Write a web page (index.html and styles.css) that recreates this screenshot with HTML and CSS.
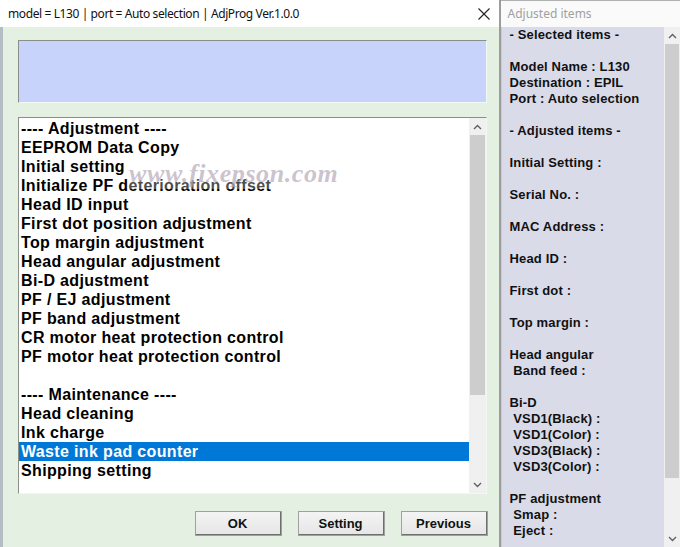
FILE: index.html
```html
<!DOCTYPE html>
<html lang="en">
<head>
  <meta charset="UTF-8">
  <title>AdjProg</title>
  <link rel="stylesheet" href="styles.css">
</head>
<body>
    <div class="main">
        <div class="titlebar">
            <span class="caption">model = L130 | port = Auto selection | AdjProg Ver.1.0.0</span>
            <svg class="close" width="12" height="12" viewBox="0 0 12 12">
                <path d="M0.5 0.5 L11.5 11.5 M11.5 0.5 L0.5 11.5" stroke="#222" stroke-width="1.1" fill="none"/>
            </svg>
        </div>
        <div class="content">
            <div class="message"></div>

            <div class="listbox">
                <ul class="items">
                    <li>---- Adjustment ----</li>
                    <li>EEPROM Data Copy</li>
                    <li>Initial setting</li>
                    <li>Initialize PF deterioration offset</li>
                    <li>Head ID input</li>
                    <li>First dot position adjustment</li>
                    <li>Top margin adjustment</li>
                    <li>Head angular adjustment</li>
                    <li>Bi-D adjustment</li>
                    <li>PF / EJ adjustment</li>
                    <li>PF band adjustment</li>
                    <li>CR motor heat protection control</li>
                    <li>PF motor heat protection control</li>
                    <li>&nbsp;</li>
                    <li>---- Maintenance ----</li>
                    <li>Head cleaning</li>
                    <li>Ink charge</li>
                    <li class="selected">Waste ink pad counter</li>
                    <li>Shipping setting</li>
                </ul>
                <div class="scrollbar">
                    <div class="arrow up"><svg width="9" height="6" viewBox="0 0 9 6"><path d="M1 5 L4.5 1.5 L8 5" stroke="#606060" stroke-width="1.4" fill="none"/></svg></div>
                    <div class="thumb list-thumb"></div>
                    <div class="track"></div>
                    <div class="arrow down"><svg width="9" height="6" viewBox="0 0 9 6"><path d="M1 1 L4.5 4.5 L8 1" stroke="#606060" stroke-width="1.4" fill="none"/></svg></div>
                </div>
                <div class="watermark">www.fixepson.com</div>
            </div>

            <div class="buttons">
                <button class="btn">OK</button>
                <button class="btn">Setting</button>
                <button class="btn">Previous</button>
            </div>
        </div>
    </div>

    <div class="side">
        <div class="side-title">Adjusted items</div>
        <div class="side-body">
            <div class="report">- Selected items -

Model Name : L130
Destination : EPIL
Port : Auto selection

- Adjusted items -

Initial Setting :

Serial No. :

MAC Address :

Head ID :

First dot :

Top margin :

Head angular
 Band feed :

Bi-D
 VSD1(Black) :
 VSD1(Color) :
 VSD3(Black) :
 VSD3(Color) :

PF adjustment
 Smap :
 Eject :</div>
            <div class="scrollbar side-scroll">
                <div class="arrow up"><svg width="9" height="6" viewBox="0 0 9 6"><path d="M1 5 L4.5 1.5 L8 5" stroke="#606060" stroke-width="1.4" fill="none"/></svg></div>
                <div class="thumb side-thumb"></div>
                <div class="track"></div>
                <div class="arrow down"><svg width="9" height="6" viewBox="0 0 9 6"><path d="M1 1 L4.5 4.5 L8 1" stroke="#606060" stroke-width="1.4" fill="none"/></svg></div>
            </div>
        </div>
    </div>
</body>
</html>
```

FILE: styles.css
```css
    html, body {
        height: 100%;
    }
    body {
        margin: 0;
        display: flex;
        flex-flow: row;
        overflow: hidden;
        font-family: "Liberation Sans", Arial, sans-serif;
        background-color: #e4f0e1;
    }
    .main {
        width: 500px;
        display: flex;
        flex-flow: column;
        background-color: #e4f0e1;
    }
    .titlebar {
        height: 27px;
        background-color: #ffffff;
        display: flex;
        align-items: center;
        justify-content: space-between;
        padding: 0 8px 0 8px;
    }
    .caption {
        font-family: "Noto Sans", sans-serif;
        font-size: 12px;
        color: #111;
        letter-spacing: -0.4px;
    }
    .close {
        margin-right: 1px;
    }
    .content {
        flex: 1;
        border-left: 3px solid #b4bcc4;
        padding: 13px 12px 0 15px;
    }
    .message {
        height: 61px;
        background-color: #c8d3fb;
        border: 1px solid #8a8f8a;
        border-right-color: #f4f8f4;
        border-bottom-color: #f4f8f4;
    }
    .listbox {
        position: relative;
        margin-top: 14px;
        height: 375px;
        background-color: #ffffff;
        border: 1px solid #8a8f8a;
        border-right-color: #f4f8f4;
        border-bottom-color: #f4f8f4;
        display: flex;
        flex-flow: row;
    }
    .items {
        flex: 1;
        list-style: none;
        margin: 0;
        padding: 1px 0 0 0;
        font-weight: bold;
        font-size: 16px;
        letter-spacing: 0.35px;
        line-height: 19px;
        color: #000;
    }
    .items li {
        padding-left: 2px;
        white-space: nowrap;
    }
    .items li.selected {
        background-color: #0078d7;
        color: #fff;
    }
    .scrollbar {
        width: 17px;
        display: flex;
        flex-flow: column;
        background-color: #f0f0f0;
    }
    .arrow {
        height: 17px;
        display: flex;
        align-items: center;
        justify-content: center;
    }
    .thumb {
        background-color: #cdcdcd;
        margin: 0 1px;
    }
    .list-thumb {
        height: 260px;
    }
    .track {
        flex: 1;
    }
    .watermark {
        position: absolute;
        left: 110px;
        top: 41px;
        font-family: "Liberation Serif", serif;
        font-style: italic;
        font-weight: bold;
        font-size: 26px;
        letter-spacing: 0.6px;
        color: rgba(180, 170, 184, 0.7);
        background-color: rgba(255, 255, 255, 0.3);
    }
    .buttons {
        display: flex;
        flex-flow: row;
        justify-content: flex-end;
        gap: 16px;
        margin-top: 17px;
        margin-right: -1px;
    }
    .btn {
        width: 87px;
        height: 25px;
        padding: 0;
        font-family: "Liberation Sans", Arial, sans-serif;
        font-weight: bold;
        font-size: 13px;
        color: #111;
        background: linear-gradient(#f4f4f4, #e6e6e6);
        border: 1px solid #fdfdfd;
        border-right: 2px solid #6e6e6e;
        border-bottom: 2px solid #6e6e6e;
        outline: 1px solid #a0a0a0;
        outline-offset: -1px;
    }
    .side {
        width: 180px;
        display: flex;
        flex-flow: column;
        border-left: 2px solid #9c9c9c;
    }
    .side-title {
        height: 26px;
        border-top: 1px solid #b0b0b0;
        background-color: #fafafa;
        font-family: "Noto Sans", sans-serif;
        font-size: 12px;
        color: #a0a0a0;
        line-height: 26px;
        padding-left: 7px;
    }
    .side-body {
        flex: 1;
        display: flex;
        flex-flow: row;
        background-color: #d9dbe8;
        border-left: 1px solid #c8cad6;
    }
    .report {
        flex: 1;
        white-space: pre;
        font-weight: bold;
        font-size: 13px;
        letter-spacing: 0.15px;
        line-height: 16px;
        color: #111;
        padding-left: 8px;
    }
    .side-scroll {
        width: 16px;
    }
    .side-thumb {
        height: 434px;
    }
```
